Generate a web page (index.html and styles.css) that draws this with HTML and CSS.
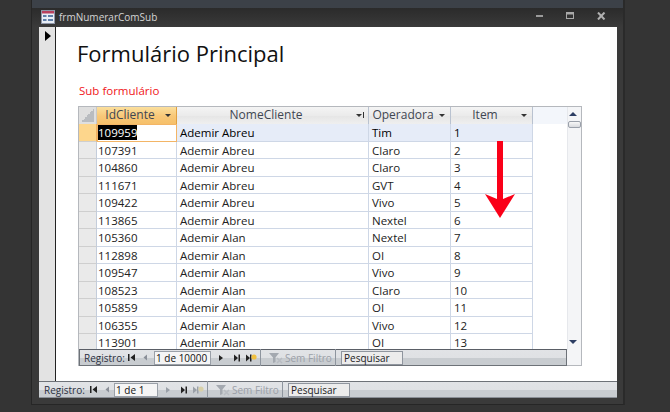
FILE: index.html
```html
<!DOCTYPE html>
<html lang="pt">
<head>
<meta charset="utf-8">
<title>frmNumerarComSub</title>
<link rel="stylesheet" href="styles.css">
</head>
<body>
<div class="desk">
  <div class="window">
    <div class="titlebar">
      <svg class="appicon" width="14" height="14" viewBox="0 0 14 14"><rect x="0.5" y="0.5" width="13" height="13" fill="#e8eef6" stroke="#8f96a8"/><rect x="1" y="1" width="12" height="2.5" fill="#b8405e"/><rect x="2" y="5" width="3.5" height="2" fill="#5f7ea8"/><rect x="7" y="5" width="5" height="2" fill="#5f7ea8"/><rect x="2" y="9" width="3.5" height="2" fill="#5f7ea8"/><rect x="7" y="9" width="5" height="2" fill="#5f7ea8"/></svg>
      <span class="wintitle">frmNumerarComSub</span>
      <span class="controls">
        <svg width="8" height="4" viewBox="0 0 8 4"><rect y="1" width="7" height="2" fill="#9a9a9a"/></svg>
        <svg width="9" height="8" viewBox="0 0 9 8"><rect x="0.5" y="0.5" width="7" height="6" fill="none" stroke="#a8a8a8"/><rect y="0" width="8" height="2.5" fill="#a8a8a8"/></svg>
        <svg width="9" height="8" viewBox="0 0 9 8"><path d="M1 0.5 L7.5 7.5 M7.5 0.5 L1 7.5" stroke="#b0b0b0" stroke-width="2"/></svg>
      </span>
    </div>
    <div class="client">
      <div class="selector"><span class="sel-arrow"></span></div>
      <div class="form">
        <h1 class="heading">Formulário Principal</h1>
        <div class="sublabel">Sub formulário</div>
        <div class="sub">
          <div class="sheet">
            <div class="grid">
              <div class="row headrow">
                <div class="corner"><span class="corner-tri"></span></div>
                <div class="hcell c1 active">IdCliente<span class="drop"></span></div>
                <div class="hcell c2">NomeCliente<span class="drop sorted"></span></div>
                <div class="hcell c3">Operadora<span class="drop"></span></div>
                <div class="hcell c4">Item<span class="drop"></span></div>
                <div class="hblank"></div>
              </div>
              <div class="rows">
                <div class="row current"><div class="rsel on"></div><div class="cell c1 edit"><span class="selected">109959</span></div><div class="cell c2">Ademir Abreu</div><div class="cell c3">Tim</div><div class="cell c4">1</div></div>
                <div class="row"><div class="rsel"></div><div class="cell c1">107391</div><div class="cell c2">Ademir Abreu</div><div class="cell c3">Claro</div><div class="cell c4">2</div></div>
                <div class="row"><div class="rsel"></div><div class="cell c1">104860</div><div class="cell c2">Ademir Abreu</div><div class="cell c3">Claro</div><div class="cell c4">3</div></div>
                <div class="row"><div class="rsel"></div><div class="cell c1">111671</div><div class="cell c2">Ademir Abreu</div><div class="cell c3">GVT</div><div class="cell c4">4</div></div>
                <div class="row"><div class="rsel"></div><div class="cell c1">109422</div><div class="cell c2">Ademir Abreu</div><div class="cell c3">Vivo</div><div class="cell c4">5</div></div>
                <div class="row"><div class="rsel"></div><div class="cell c1">113865</div><div class="cell c2">Ademir Abreu</div><div class="cell c3">Nextel</div><div class="cell c4">6</div></div>
                <div class="row"><div class="rsel"></div><div class="cell c1">105360</div><div class="cell c2">Ademir Alan</div><div class="cell c3">Nextel</div><div class="cell c4">7</div></div>
                <div class="row"><div class="rsel"></div><div class="cell c1">112898</div><div class="cell c2">Ademir Alan</div><div class="cell c3">OI</div><div class="cell c4">8</div></div>
                <div class="row"><div class="rsel"></div><div class="cell c1">109547</div><div class="cell c2">Ademir Alan</div><div class="cell c3">Vivo</div><div class="cell c4">9</div></div>
                <div class="row"><div class="rsel"></div><div class="cell c1">108523</div><div class="cell c2">Ademir Alan</div><div class="cell c3">Claro</div><div class="cell c4">10</div></div>
                <div class="row"><div class="rsel"></div><div class="cell c1">105859</div><div class="cell c2">Ademir Alan</div><div class="cell c3">OI</div><div class="cell c4">11</div></div>
                <div class="row"><div class="rsel"></div><div class="cell c1">106355</div><div class="cell c2">Ademir Alan</div><div class="cell c3">Vivo</div><div class="cell c4">12</div></div>
                <div class="row"><div class="rsel"></div><div class="cell c1">113901</div><div class="cell c2">Ademir Alan</div><div class="cell c3">OI</div><div class="cell c4">13</div></div>
              </div>
            </div>
            <div class="vscroll">
              <span class="up"></span>
              <span class="thumb"></span>
              <span class="down"></span>
            </div>
          </div>
          <div class="nav inner">
            <span class="navlabel">Registro:</span>
            <svg class="navbtns first" width="22" height="9" viewBox="0 0 22 9"><rect x="1" y="1" width="1.5" height="7" fill="#222"/><path d="M8 1 L3.5 4.5 L8 8Z" fill="#222"/><path d="M20 1.5 L16.5 4.5 L20 7.5Z" fill="#8a8f98"/></svg>
            <span class="navbox">1 de 10000</span>
            <svg class="navbtns" width="40" height="10" viewBox="0 0 40 10"><path d="M2 2 L6 5 L2 8Z" fill="#222"/><path d="M17 1.5 L21 5 L17 8.5Z" fill="#222"/><rect x="21.5" y="1.5" width="1.5" height="7" fill="#222"/><path d="M29 1.5 L33 5 L29 8.5Z" fill="#222"/><rect x="33" y="1.5" width="1.5" height="7" fill="#222"/><circle cx="37" cy="4" r="2.6" fill="#f0c040"/></svg>
            <span class="navsep"></span>
            <svg class="funnel" width="15" height="12" viewBox="0 0 15 12"><path d="M1 1 H11 L7.5 5.5 V10 L5 11 V5.5Z" fill="#a4a9b0"/><path d="M9 6 L14 11 M14 6 L9 11" stroke="#b8bcc2" stroke-width="1.5"/></svg>
            <span class="nofilter">Sem Filtro</span>
            <span class="navsep"></span>
            <span class="search">Pesquisar</span>
          </div>
        </div>
        <svg class="redarrow" width="34" height="78" viewBox="0 0 34 78"><path d="M14 0 H20 V58 L32 53 L17 77 L2 53 L14 58Z" fill="#fa0018"/></svg>
      </div>
    </div>
    <div class="nav outer">
      <span class="navlabel">Registro:</span>
      <svg class="navbtns" width="22" height="9" viewBox="0 0 22 9"><rect x="1" y="1" width="1.5" height="7" fill="#222"/><path d="M8 1 L3.5 4.5 L8 8Z" fill="#222"/><path d="M20 1.5 L16.5 4.5 L20 7.5Z" fill="#8a8f98"/></svg>
      <span class="navbox wide">1 de 1</span>
      <svg class="navbtns" width="40" height="10" viewBox="0 0 40 10"><path d="M2 2 L6 5 L2 8Z" fill="#9aa0a8"/><path d="M17 1.5 L21 5 L17 8.5Z" fill="#222"/><rect x="21.5" y="1.5" width="1.5" height="7" fill="#222"/><path d="M29 1.5 L33 5 L29 8.5Z" fill="#9aa0a8"/><rect x="33" y="1.5" width="1.5" height="7" fill="#9aa0a8"/><circle cx="37" cy="4" r="2.6" fill="#d8d0a8"/></svg>
      <span class="navsep"></span>
      <svg class="funnel" width="15" height="12" viewBox="0 0 15 12"><path d="M1 1 H11 L7.5 5.5 V10 L5 11 V5.5Z" fill="#a4a9b0"/><path d="M9 6 L14 11 M14 6 L9 11" stroke="#b8bcc2" stroke-width="1.5"/></svg>
      <span class="nofilter">Sem Filtro</span>
      <span class="navsep"></span>
      <span class="search">Pesquisar</span>
    </div>
  </div>
</div>
</body>
</html>
```
FILE: styles.css
```css
* { box-sizing: border-box; }
html, body { margin: 0; padding: 0; }
body { width: 670px; height: 412px; overflow: hidden; background: #323232; font-family: "Open Sans", "Noto Sans", sans-serif; }
.desk { width: 670px; height: 412px; padding: 0 0 0 31px; background: #343434; }
.window { width: 594px; height: 405px; padding-top: 8px; background: linear-gradient(#3c4148 0, #3c4148 8px, #3a3a3a 8px); border-right: 2px solid #2a2a2a; border-left: 1px solid #262626; border-bottom: 1px solid #262626; display: flex; flex-direction: column; }
.titlebar { height: 19px; flex: none; display: flex; align-items: center; padding: 0 0 0 9px; background: linear-gradient(#2b2b2b, #3a3a3a); color: #d4d4d4; font-size: 10px; }
.appicon { flex: none; margin-right: 4px; margin-top: -2px; }
.wintitle { flex: 1; font-size: 10px; margin-top: -2px; }
.controls { display: flex; align-items: center; gap: 22px; margin-right: 17px; margin-top: -3px; }
.client { flex: none; height: 354px; margin: 0 6px 0 7px; display: flex; }
.selector { width: 17px; flex: none; background: #e3e3e3; border-right: 1px solid #222; }
.sel-arrow { display: block; width: 0; height: 0; margin: 4px 0 0 6px; border-left: 6px solid #000; border-top: 5px solid transparent; border-bottom: 5px solid transparent; }
.form { flex: 1; background: #fff; padding: 13px 0 0 21px; position: relative; }
.heading { margin: 0; font-weight: 400; font-size: 22px; line-height: 27px; color: #111; }
.sublabel { margin: 16px 0 0 2px; color: #f01520; font-size: 11.5px; line-height: 16px; height: 16px; }
.sub { width: 504px; height: 260px; margin: 7px 0 0 1px; border: 1px solid #b5b8bd; position: relative; display: flex; flex-direction: column; background: #f4f5f7; }
.sheet { height: 243px; flex: none; display: flex; overflow: hidden; position: relative; background: #fff; }
.grid { width: 488px; flex: none; }
.row { display: flex; height: 17.5px; }
.headrow { height: 17px; background: #f3f6fb; }
.rows { height: 226px; overflow: hidden; }
.corner { width: 18px; flex: none; background: #dfdfdf; border-right: 1px solid #c8c8c8; padding: 2px; }
.corner-tri { display: block; width: 13px; height: 13px; background: linear-gradient(135deg, #dfdfdf 50%, #b9bcc0 50%); }
.hcell { flex: none; position: relative; text-align: center; padding-right: 13px; font-size: 12px; line-height: 16px; color: #3f4652; background: linear-gradient(#f4f4f4, #ebebeb 50%, #e6e6e6 55%, #efefef); border-right: 1px solid #b9c2d0; }
.hcell.active { background: linear-gradient(#fbdf9d, #f8c777 55%, #f6c06a); border-right-color: #e0a040; }
.hblank { flex: 1; }
.c1 { width: 80px; }
.c2 { width: 192px; }
.c3 { width: 82px; }
.c4 { width: 82px; }
.drop { position: absolute; right: 5px; top: 7px; width: 0; height: 0; border-left: 3px solid transparent; border-right: 3px solid transparent; border-top: 3px solid #333; }
.drop.sorted { right: 6px; }
.drop.sorted::after { content: ""; position: absolute; left: 4px; top: -5px; width: 1px; height: 6px; background: #333; }
.rsel { width: 18px; flex: none; background: #eaeaea; border-right: 1px solid #c4cddb; border-bottom: 1px solid #cfcfcf; }
.rsel.on { background: #fdd68c; border-right-color: #f0b060; }
.cell { flex: none; font-size: 11.5px; line-height: 17px; padding-left: 3px; color: #222; border-right: 1px solid #ced7e6; border-bottom: 1px solid #ced7e6; white-space: nowrap; overflow: hidden; }
.cell.c1 { padding-left: 1px; }
.current .cell { background: #e6ecf8; color: #000; }
.current .cell.edit { background: #fff; border: 1px solid #f3b566; padding-left: 0; line-height: 15px; }
.selected { background: #000; color: #fff; display: inline-block; height: 15px; }
.vscroll { flex: 1; position: relative; background: #f4f5f7; border-left: 1px solid #e6e8ec; }
.up, .down { position: absolute; left: 1px; width: 0; height: 0; border-left: 4px solid transparent; border-right: 4px solid transparent; }
.up { top: 5px; border-bottom: 4px solid #2d3e63; }
.down { bottom: 6px; border-top: 4px solid #2d3e63; }
.thumb { position: absolute; left: 0; top: 14px; width: 13px; height: 7px; border: 1px solid #9aa0aa; border-radius: 2px; background: linear-gradient(#f8f8f8, #d8dade); }
.nav { flex: none; display: flex; align-items: center; font-size: 10px; color: #2a3040; background: linear-gradient(#e1e3e6 0, #dfe1e4 52%, #c8ccd0 52%, #c8ccd0 100%); }
.inner { width: 488px; height: 17px; border: 1px solid #6d7278; border-top-color: #5a5e66; position: relative; z-index: 1; padding-left: 4px; margin-top: -1px; }
.outer { margin: 0 6px 0 7px; height: 17px; border-top: 1px solid #6e7278; border-bottom: 1px solid #8a8f96; padding-left: 5px; }
.navlabel { width: 39px; margin-right: 6px; flex: none; white-space: nowrap; }
.inner .navlabel { margin-right: 4px; }
.navbtns { flex: none; margin-right: 3px; }
.navbtns.first { margin-right: 5px; }
.navbox { width: 57px; height: 14px; background: #f5f5f5; border: 1px solid #9aa0a8; font-size: 10px; color: #111; line-height: 12px; padding-left: 1px; margin-right: 6px; flex: none; white-space: nowrap; overflow: hidden; }
.navbox.wide { width: 44px; }
.navsep { width: 1px; height: 17px; background: #8e959e; flex: none; margin: 0 7px 0 0; }
.funnel { flex: none; margin-right: 2px; }
.nofilter { color: #9ba0a8; flex: none; width: 43px; white-space: nowrap; margin-right: 7px; }
.search { width: 62px; height: 14px; line-height: 12px; padding-left: 2px; border: 1px solid #8f959e; background: #ececec; color: #222; flex: none; margin-left: -2px; }
.redarrow { position: absolute; left: 427px; top: 114px; }
```
